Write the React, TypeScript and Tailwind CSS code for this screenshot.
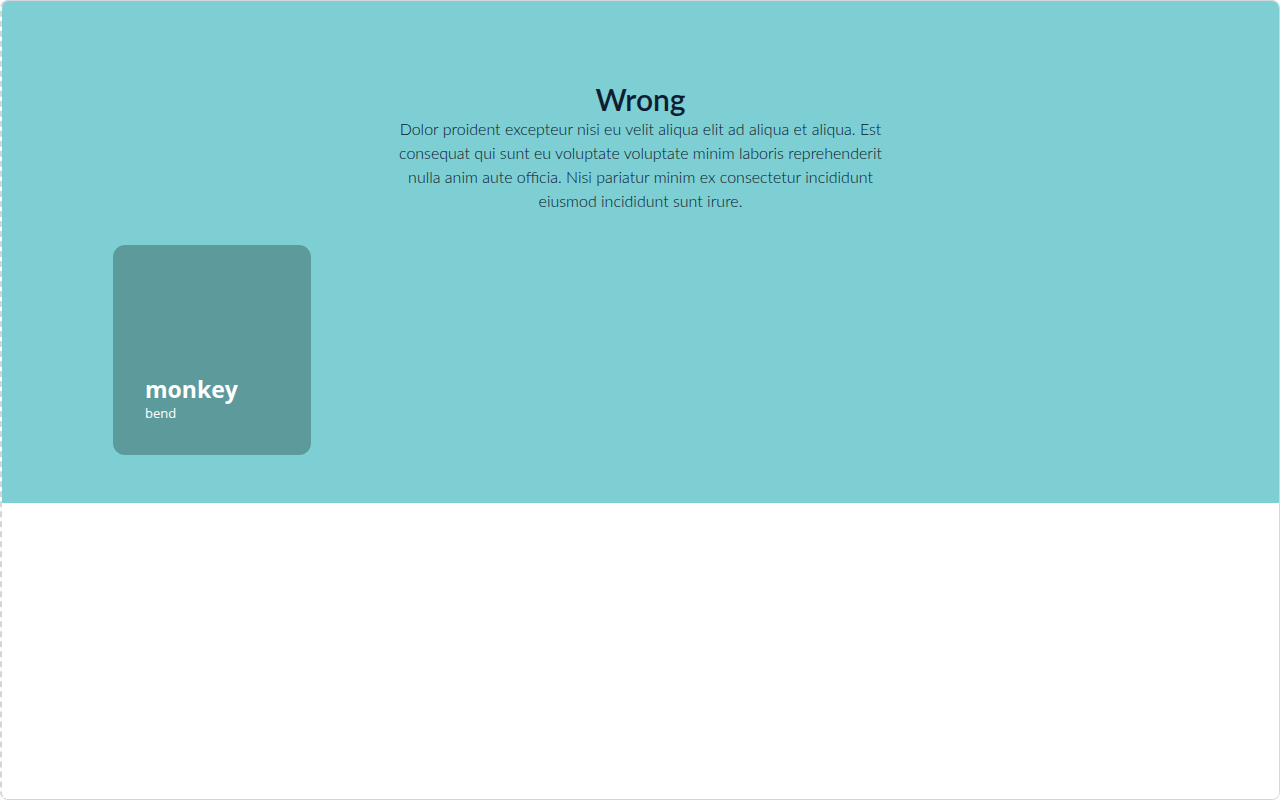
export default function App() {
  return (
    <div className="h-[800px] w-[1280px] overflow-hidden bg-white">
      <div className="flex h-full flex-col overflow-hidden rounded-lg border border-l-2 border-gray-300 [border-left-style:dashed] border-r-[#b9e3e6]">
        <section className="bg-[#7ecfd4] px-[111px] pb-[48px] pt-[80px]">
          <div className="mx-auto flex max-w-[500px] flex-col items-center text-center text-[#0f1d33] [font-family:Lato,sans-serif]">
            <h1 className="text-[30px] font-semibold leading-9">Wrong</h1>
            <p className="text-[16px] font-light leading-6 text-[#081528]">
              Dolor proident excepteur nisi eu velit aliqua elit ad aliqua et aliqua. Est consequat qui sunt eu voluptate
              voluptate minim laboris reprehenderit nulla anim aute officia. Nisi pariatur minim ex consectetur incididunt
              eiusmod incididunt sunt irure.
            </p>
          </div>
          <div className="mt-8 flex">
            <div className="flex h-[210px] w-[198px] flex-col justify-end rounded-xl bg-[#5c9a9c] px-8 pb-[32px] text-white [font-family:'Open_Sans',sans-serif]">
              <h2 className="text-[23px] font-bold leading-7">monkey</h2>
              <p className="text-[13px] leading-5">bend</p>
            </div>
          </div>
        </section>
        <div className="flex-1 bg-white" />
      </div>
    </div>
  );
}
